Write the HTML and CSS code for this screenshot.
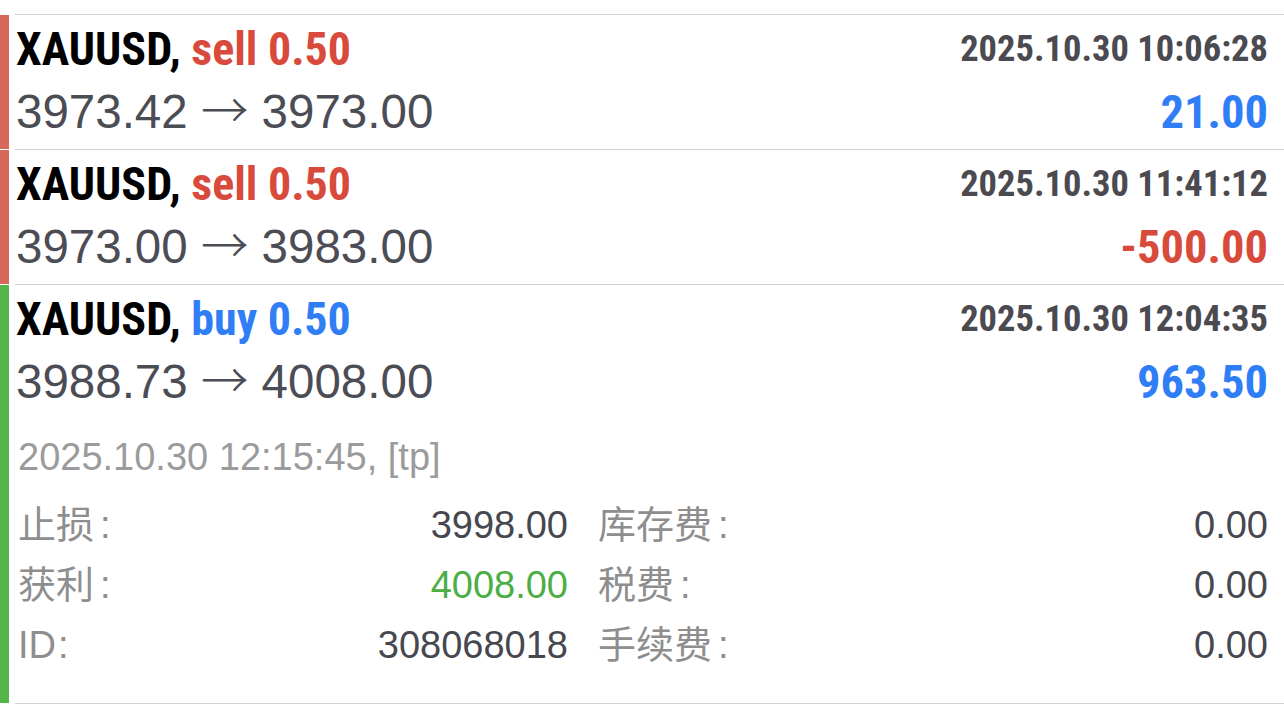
FILE: index.html
```html
<!DOCTYPE html>
<html lang="zh-CN">
<head>
    <meta charset="UTF-8">
    <meta name="viewport" content="width=device-width, initial-scale=1.0">
    <title>History</title>
    <link rel="stylesheet" href="styles.css">
</head>
<body>

    <ul class="deals">
        <li class="deal deal-sell">
            <div class="deal-bar"></div>
            <div class="deal-body">
                <div class="deal-head">
                    <span class="deal-title">XAUUSD, <span class="side sell">sell 0.50</span></span>
                    <span class="deal-time">2025.10.30 10:06:28</span>
                </div>
                <div class="deal-prices">
                    <span class="deal-price">3973.42 <span class="arrow">→</span> 3973.00</span>
                    <span class="deal-profit plus">21.00</span>
                </div>
            </div>
        </li>

        <li class="deal deal-sell">
            <div class="deal-bar"></div>
            <div class="deal-body">
                <div class="deal-head">
                    <span class="deal-title">XAUUSD, <span class="side sell">sell 0.50</span></span>
                    <span class="deal-time">2025.10.30 11:41:12</span>
                </div>
                <div class="deal-prices">
                    <span class="deal-price">3973.00 <span class="arrow">→</span> 3983.00</span>
                    <span class="deal-profit minus">-500.00</span>
                </div>
            </div>
        </li>

        <li class="deal deal-buy">
            <div class="deal-bar"></div>
            <div class="deal-body deal-open">
                <div class="deal-head">
                    <span class="deal-title">XAUUSD, <span class="side buy">buy 0.50</span></span>
                    <span class="deal-time">2025.10.30 12:04:35</span>
                </div>
                <div class="deal-prices">
                    <span class="deal-price">3988.73 <span class="arrow">→</span> 4008.00</span>
                    <span class="deal-profit plus">963.50</span>
                </div>

                <div class="deal-close">2025.10.30 12:15:45, [tp]</div>

                <div class="deal-info">
                    <div class="info-cell"><span class="info-label">止损<span class="colon">:</span></span><span class="info-value">3998.00</span></div>
                    <div class="info-cell"><span class="info-label">库存费<span class="colon">:</span></span><span class="info-value">0.00</span></div>
                    <div class="info-cell"><span class="info-label">获利<span class="colon">:</span></span><span class="info-value tp">4008.00</span></div>
                    <div class="info-cell"><span class="info-label">税费<span class="colon">:</span></span><span class="info-value">0.00</span></div>
                    <div class="info-cell"><span class="info-label">ID<span class="colon short">:</span></span><span class="info-value">308068018</span></div>
                    <div class="info-cell"><span class="info-label">手续费<span class="colon">:</span></span><span class="info-value">0.00</span></div>
                </div>
            </div>
        </li>
    </ul>

</body>
</html>
```

FILE: styles.css
```css
body {
    margin: 0;
    background-color: #fff;
    font-family: 'Liberation Sans', Arial, sans-serif;
    color: #4b4b53;
}

.deals {
    list-style: none;
    margin: 14px 0 0 0;
    padding: 0;
}

.deal {
    display: flex;
}

.deal-bar {
    width: 9px;
    flex-shrink: 0;
    margin-bottom: 1px;
}

.deal-sell .deal-bar {
    background-color: #d6685a;
}

.deal-buy .deal-bar {
    background-color: #54b548;
}

.deal-body {
    flex: 1;
    margin-left: 6px;
    padding: 9px 16px 9px 1px;
    border-bottom: 1px solid #d2d2d2;
}

.deal:first-child .deal-body {
    border-top: 1px solid #d2d2d2;
}

.deal:first-child .deal-bar {
    margin-top: 1px;
}

.deal-open {
    padding-bottom: 28px;
}

.deal-head {
    display: flex;
    justify-content: space-between;
    align-items: flex-start;
}

.deal-title,
.deal-time,
.deal-profit {
    font-family: 'Roboto Condensed', 'Liberation Sans', sans-serif;
    font-weight: bold;
}

.deal-title {
    font-size: 46px;
    line-height: 50px;
    color: #000;
}

.side.sell {
    color: #d84a3b;
}

.side.buy {
    color: #2f7ef6;
}

.deal-time {
    font-size: 36.5px;
    line-height: 49px;
    color: #4a4a50;
}

.deal-prices {
    display: flex;
    justify-content: space-between;
    align-items: baseline;
    margin-top: 10px;
}

.deal-price {
    font-size: 47.5px;
    line-height: 56px;
    color: #4c4c55;
}

.arrow {
    font-family: 'Noto Sans CJK SC', sans-serif;
    font-weight: 300;
    line-height: 0;
}

.deal-profit {
    font-size: 46.5px;
    line-height: 56px;
}

.deal-profit.plus {
    color: #2f7ef6;
}

.deal-profit.minus {
    color: #d84a3b;
}

.deal-close {
    margin: 25px 0 0 2px;
    font-size: 38px;
    line-height: 44px;
    color: #9b9b9b;
}

.deal-info {
    display: grid;
    grid-template-columns: 550px 1fr;
    column-gap: 30px;
    margin: 16px 0 0 2px;
}

.info-cell {
    display: flex;
    justify-content: space-between;
    font-size: 38px;
    line-height: 60px;
}

.info-label {
    font-family: 'Liberation Sans', 'Noto Sans CJK SC', sans-serif;
    color: #8e8e8e;
}

.colon {
    margin-left: 6px;
}

.colon.short {
    margin-left: 2px;
}

.info-value {
    color: #47474f;
}

.info-value.tp {
    color: #4caf45;
}
```
